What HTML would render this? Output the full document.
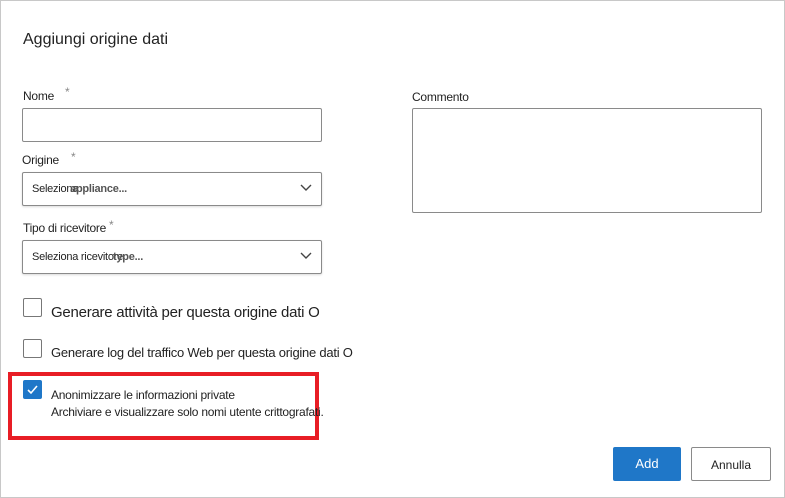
<!DOCTYPE html><html><head><style>
body{margin:0;width:785px;height:498px;background:#fff;font-family:"Liberation Sans",sans-serif;color:#222;position:relative;overflow:hidden}
.fr{position:absolute;left:0;top:0;width:783px;height:496px;border:1px solid #c8c8c8}
.a{position:absolute;white-space:nowrap}
.box{position:absolute;border:1px solid #8a8a8a;border-radius:2px;background:#fff;box-sizing:border-box}
.sel{box-shadow:0 1px 2px rgba(0,0,0,.15)}
.cb{position:absolute;width:19px;height:19px;border:1px solid #777;border-radius:2px;box-sizing:border-box}
.star{color:#888;font-size:12px}
.t{letter-spacing:-0.25px}
</style></head><body><div class="fr"></div>
<div class="a" style="left:23px;top:31px;font-size:16px;color:#222">Aggiungi origine dati</div>
<div class="a t" style="left:23px;top:89px;font-size:12px">Nome</div><div class="a star" style="left:65px;top:85px">*</div>
<div class="box" style="left:22px;top:108px;width:300px;height:34px"></div>
<div class="a t" style="left:22px;top:153px;font-size:12px">Origine</div><div class="a star" style="left:71px;top:150px">*</div>
<div class="box sel" style="left:22px;top:172px;width:300px;height:34px"></div>
<div class="a t" style="left:32px;top:183px;font-size:11px">Seleziona<b style="color:#555;margin-left:-8px">appliance...</b></div>
<svg class="a" style="left:300px;top:184px" width="12" height="8"><path d="M1 1L6 6L11 1" stroke="#444" stroke-width="1.4" fill="none"/></svg>
<div class="a t" style="left:23px;top:221px;font-size:12px">Tipo di ricevitore</div><div class="a star" style="left:109px;top:218px">*</div>
<div class="box sel" style="left:22px;top:240px;width:300px;height:34px"></div>
<div class="a t" style="left:32px;top:251px;font-size:11px">Seleziona ricevitore<b style="color:#555;margin-left:-10px">type...</b></div>
<svg class="a" style="left:300px;top:252px" width="12" height="8"><path d="M1 1L6 6L11 1" stroke="#444" stroke-width="1.4" fill="none"/></svg>
<div class="a t" style="left:412px;top:90px;font-size:12px">Commento</div>
<div class="box" style="left:412px;top:108px;width:350px;height:105px"></div>
<div class="cb" style="left:23px;top:298px"></div>
<div class="a t" style="left:51px;top:304px;font-size:15px">Generare attività per questa origine dati O</div>
<div class="cb" style="left:23px;top:339px"></div>
<div class="a t" style="left:51px;top:345px;font-size:13px">Generare log del traffico Web per questa origine dati O</div>
<div class="a" style="left:8px;top:372px;width:303px;height:60px;border:4px solid #e81d25"></div>
<div class="a" style="left:23px;top:380px;width:19px;height:19px;background:#1f77c8;border-radius:2px"><svg width="19" height="19"><path d="M5 10L8 13L14 6" stroke="#fff" stroke-width="1.6" fill="none"/></svg></div>
<div class="a t" style="left:51px;top:388px;font-size:12px">Anonimizzare le informazioni private</div>
<div class="a t" style="left:51px;top:405px;font-size:12px">Archiviare e visualizzare solo nomi utente crittografati.</div>
<div class="a" style="left:613px;top:447px;width:68px;height:34px;background:#1f77c8;border-radius:2px;color:#fff;font-size:13px;text-align:center;line-height:34px">Add</div>
<div class="a" style="left:691px;top:447px;width:80px;height:34px;border:1px solid #8a8a8a;box-sizing:border-box;border-radius:2px;font-size:12px;text-align:center;line-height:34px">Annulla</div>
</body></html>
